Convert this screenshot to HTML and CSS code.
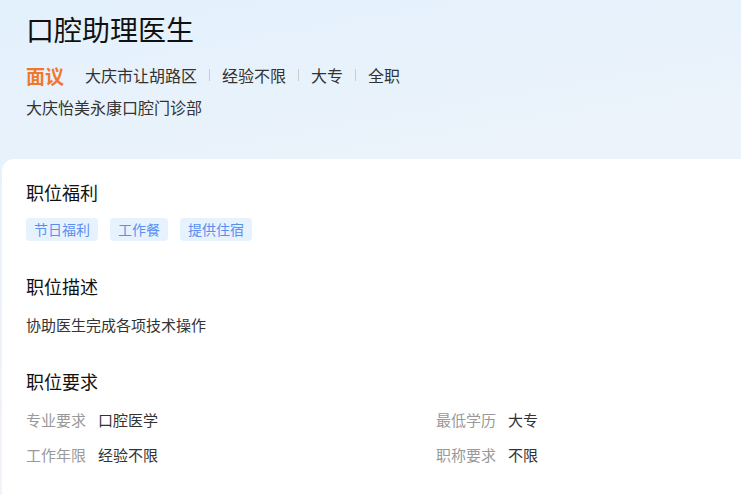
FILE: index.html
```html
<!DOCTYPE html>
<html lang="zh-CN">
  <head>
    <meta charset="UTF-8" />
    <meta name="viewport" content="width=device-width, initial-scale=1.0" />
    <title>口腔助理医生</title>
    <link rel="stylesheet" href="styles.css">
  </head>

  <body>
    <!-- 顶部职位信息 -->
    <div class="job-head">
      <h1 class="job-name">口腔助理医生</h1>
      <div class="job-meta">
        <span class="salary">面议</span>
        <span class="meta-item">大庆市让胡路区</span>
        <span class="meta-item">经验不限</span>
        <span class="meta-item">大专</span>
        <span class="meta-item">全职</span>
      </div>
      <div class="company">大庆怡美永康口腔门诊部</div>
    </div>

    <!-- 详情卡片 -->
    <div class="job-card">
      <div class="section">
        <h2 class="section-title">职位福利</h2>
        <ul class="tag-list">
          <li class="tag">节日福利</li>
          <li class="tag">工作餐</li>
          <li class="tag">提供住宿</li>
        </ul>
      </div>

      <div class="section">
        <h2 class="section-title">职位描述</h2>
        <p class="desc">协助医生完成各项技术操作</p>
      </div>

      <div class="section">
        <h2 class="section-title">职位要求</h2>
        <div class="require-list">
          <div class="require"><span class="label">专业要求</span><span class="value">口腔医学</span></div>
          <div class="require"><span class="label">最低学历</span><span class="value">大专</span></div>
          <div class="require"><span class="label">工作年限</span><span class="value">经验不限</span></div>
          <div class="require"><span class="label">职称要求</span><span class="value">不限</span></div>
        </div>
      </div>
    </div>
  </body>
</html>
```

FILE: styles.css
```css
* {
  margin: 0;
  padding: 0;
}

body {
  font-family: "Noto Sans CJK SC", "Liberation Sans", sans-serif;
  color: #333;
  background: linear-gradient(170deg, #e3f1fd 0%, #edf3fa 45%, #f3f4f8 100%);
  min-height: 495px;
}

.job-head {
  padding: 11px 26px 41px;
}

.job-name {
  font-size: 28px;
  line-height: 36px;
  font-weight: 400;
  color: #111;
}

.job-meta {
  display: flex;
  align-items: center;
  margin-top: 15px;
  height: 26px;
}

.job-meta .salary {
  font-size: 19px;
  font-weight: 700;
  color: #f0782a;
  margin-right: 21px;
}

.job-meta .meta-item {
  font-size: 16px;
  color: #333;
  display: flex;
  align-items: center;
}

.job-meta .meta-item + .meta-item::before {
  content: "";
  width: 1px;
  height: 12px;
  background-color: #ccc;
  margin: 0 12px;
}

.company {
  margin-top: 8px;
  font-size: 16px;
  line-height: 22px;
  color: #333;
}

.job-card {
  margin-left: 2px;
  background-color: #fff;
  border-radius: 12px 0 0 0;
  padding: 20px 24px 30px;
  min-height: 300px;
}

.section + .section {
  margin-top: 32px;
}

.section-title {
  font-size: 18px;
  line-height: 26px;
  font-weight: 400;
  color: #111;
}

.tag-list {
  list-style: none;
  display: flex;
  gap: 12px;
  margin-top: 13px;
}

.tag {
  font-size: 14px;
  line-height: 23px;
  padding: 0 8px;
  border-radius: 4px;
  color: #5c8ef0;
  background-color: #e6f3ff;
}

.desc {
  margin-top: 15px;
  font-size: 15px;
  line-height: 22px;
  color: #333;
}

.require-list {
  display: grid;
  grid-template-columns: 410px 1fr;
  row-gap: 13px;
  margin-top: 15px;
}

.require {
  display: flex;
  gap: 12px;
  font-size: 15px;
  line-height: 22px;
}

.require .label {
  color: #999;
}

.require .value {
  color: #333;
}
```
